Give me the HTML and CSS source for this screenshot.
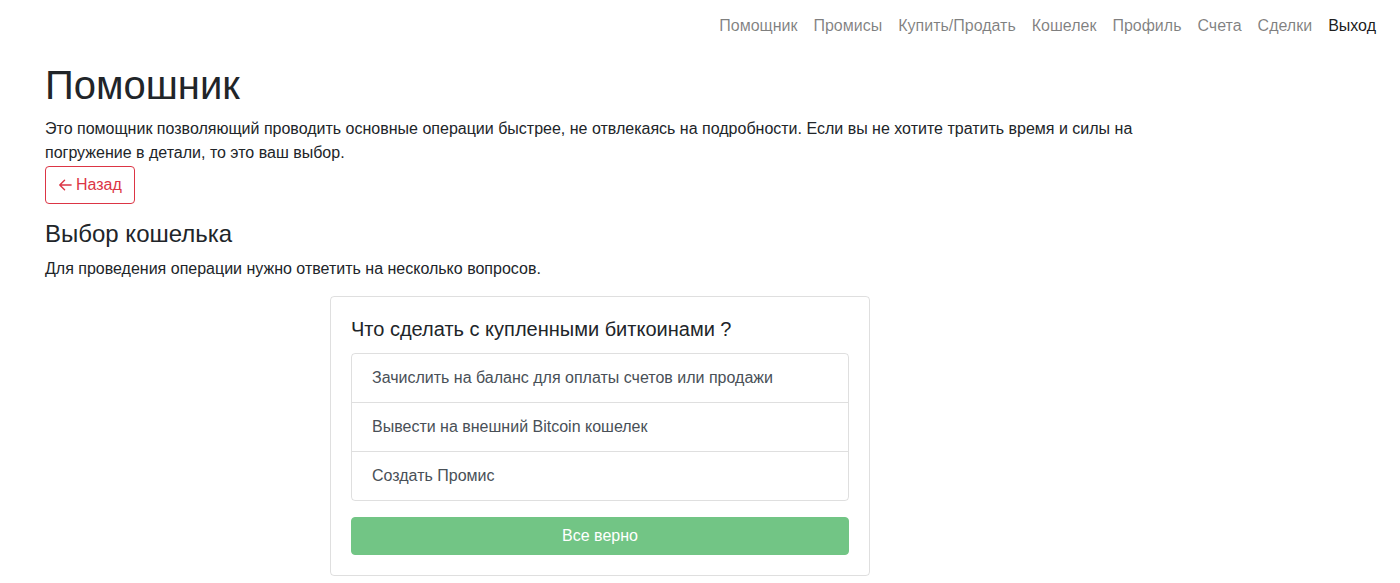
FILE: index.html
```html
<!DOCTYPE html>
<html lang="ru">
<head>
<meta charset="utf-8">
<title>Помошник</title>
<link rel="stylesheet" href="styles.css">
</head>
<body>
<nav class="navbar">
  <ul class="nav">
    <li><a class="nav-link" href="#">Помощник</a></li>
    <li><a class="nav-link" href="#">Промисы</a></li>
    <li><a class="nav-link" href="#">Купить/Продать</a></li>
    <li><a class="nav-link" href="#">Кошелек</a></li>
    <li><a class="nav-link" href="#">Профиль</a></li>
    <li><a class="nav-link" href="#">Счета</a></li>
    <li><a class="nav-link" href="#">Сделки</a></li>
    <li><a class="nav-link active" href="#">Выход</a></li>
  </ul>
</nav>
<main class="main">
  <h1 class="title">Помошник</h1>
  <p class="lead-text">Это помощник позволяющий проводить основные операции быстрее, не отвлекаясь на подробности. Если вы не хотите тратить время и силы на погружение в детали, то это ваш выбор.</p>
  <button class="btn btn-back" type="button"><svg class="arrow" width="14" height="14" viewBox="0 0 16 16"><path d="M15 8H2M7.5 2.5L2 8l5.5 5.5" fill="none" stroke="currentColor" stroke-width="1.6" stroke-linecap="round" stroke-linejoin="round"/></svg>Назад</button>
  <h4 class="subtitle">Выбор кошелька</h4>
  <p class="hint">Для проведения операции нужно ответить на несколько вопросов.</p>
  <div class="card-wrap">
    <div class="card">
      <h5 class="card-title">Что сделать с купленными биткоинами ?</h5>
      <div class="list-group">
        <a class="list-item" href="#">Зачислить на баланс для оплаты счетов или продажи</a>
        <a class="list-item" href="#">Вывести на внешний Bitcoin кошелек</a>
        <a class="list-item" href="#">Создать Промис</a>
      </div>
      <button class="btn btn-ok" type="button" disabled>Все верно</button>
    </div>
  </div>
</main>
</body>
</html>
```

FILE: styles.css
```css
* { box-sizing: border-box; }
html, body { margin: 0; padding: 0; }
body {
  font-family: "Liberation Sans", Arial, sans-serif;
  font-size: 16px;
  line-height: 1.5;
  color: #212529;
  background: #fff;
}
.navbar {
  display: flex;
  justify-content: flex-end;
  padding: 6px 16px 4px;
}
.nav {
  display: flex;
  list-style: none;
  margin: 0;
  padding: 0;
}
.nav-link {
  display: block;
  padding: 8px 8px;
  color: rgba(0,0,0,.5);
  text-decoration: none;
}
.nav-link.active { color: rgba(0,0,0,.9); }
.main {
  margin-left: 30px;
  width: 1140px;
  padding: 0 15px;
}
.title {
  font-size: 40px;
  font-weight: 400;
  line-height: 1.2;
  margin: 11px 0 8px;
}
.lead-text { margin: 0; }
.btn {
  display: inline-flex;
  align-items: center;
  justify-content: center;
  font-family: inherit;
  font-size: 16px;
  line-height: 24px;
  padding: 6px 12px;
  border: 1px solid transparent;
  border-radius: 4px;
  background: transparent;
  cursor: pointer;
}
.btn-back {
  margin-top: 1px;
  color: #dc3545;
  border-color: #dc3545;
}
.arrow { margin-right: 4px; }
.subtitle {
  font-size: 24px;
  font-weight: 400;
  line-height: 1.2;
  margin: 16px 0 8px;
}
.hint { margin: 0 0 15px; }
.card-wrap {
  display: flex;
  justify-content: center;
}
.card {
  width: 540px;
  border: 1px solid rgba(0,0,0,.125);
  border-radius: 4px;
  padding: 20px;
}
.card-title {
  font-size: 20px;
  font-weight: 400;
  line-height: 1.2;
  margin: 0 0 12px;
}
.list-group {
  display: flex;
  flex-direction: column;
  border: 1px solid rgba(0,0,0,.125);
  border-radius: 4px;
}
.list-item {
  display: block;
  padding: 12px 20px;
  color: #495057;
  text-decoration: none;
  border-top: 1px solid rgba(0,0,0,.125);
}
.list-item:first-child { border-top: 0; }
.btn-ok {
  display: flex;
  width: 100%;
  margin-top: 16px;
  color: #fff;
  background: #28a745;
  border-color: #28a745;
  opacity: .65;
  cursor: default;
}
```
